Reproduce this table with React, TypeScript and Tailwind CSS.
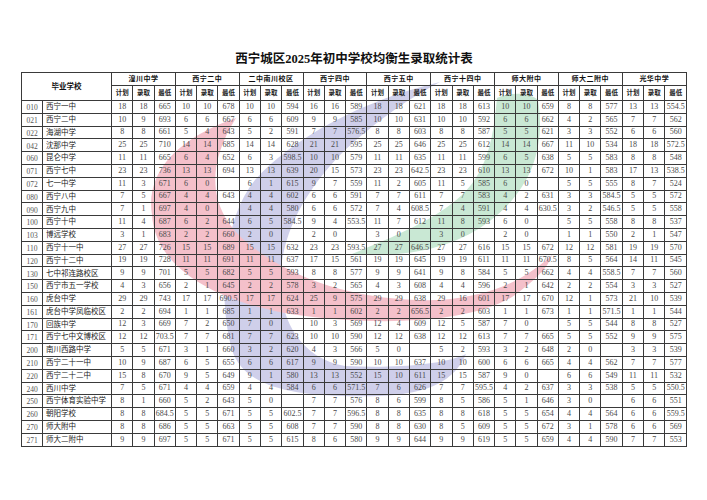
import React from "react";

const GROUPS = [
  "湟川中学",
  "西宁二中",
  "二中南川校区",
  "西宁四中",
  "西宁五中",
  "西宁十四中",
  "师大附中",
  "师大二附中",
  "光华中学",
];

const SUB = ["计划", "录取", "最低"];

// id name then 9 x (计划 录取 最低), "-" = empty
const RAW = [
  "010 西宁一中 18 18 665 10 10 678 10 10 594 16 16 589 18 18 621 18 18 613 10 10 659 8 8 577 13 13 554.5",
  "021 西宁二中 10 9 693 6 6 667 6 6 609 9 9 585 10 10 631 10 10 592 6 6 662 4 2 565 7 7 562",
  "022 海湖中学 8 8 661 5 4 643 5 2 591 7 7 576.5 8 8 603 8 8 587 5 5 621 3 3 552 6 6 560",
  "042 沈那中学 25 25 710 14 14 685 14 14 628 21 21 595 25 25 646 25 25 612 14 14 667 11 10 534 18 18 572.5",
  "060 昆仑中学 11 11 665 6 4 652 6 3 598.5 10 10 579 11 11 635 11 11 599 6 5 638 5 5 583 8 8 548",
  "071 西宁七中 23 23 736 13 13 694 13 13 639 20 15 573 23 23 642.5 23 23 610 13 13 672 10 1 583 17 13 538.5",
  "072 七一中学 11 3 671 6 0 - 6 1 615 9 7 559 11 2 605 11 5 585 6 0 - 5 5 555 8 7 524",
  "080 西宁八中 7 5 667 4 4 643 4 4 602 6 6 591 7 7 611 7 7 583 4 2 631 3 3 584.5 5 5 572",
  "090 西宁九中 7 1 697 4 0 - 4 4 580 6 6 572 7 4 608.5 7 4 591 4 4 630.5 3 2 546.5 5 5 558",
  "100 西宁十中 11 4 687 6 2 644 6 5 584.5 9 4 553.5 11 7 612 11 8 593 6 0 - 5 5 558 8 8 537",
  "103 博远学校 3 1 683 2 2 660 2 0 - 2 0 - 3 0 - 3 0 - 2 0 - 1 1 550 2 1 547",
  "110 西宁十一中 27 27 726 15 15 689 15 15 632 23 23 593.5 27 27 646.5 27 27 616 15 15 672 12 12 581 19 19 570",
  "120 西宁十二中 19 19 728 11 11 691 11 11 637 17 15 561 19 19 645 19 19 611 11 11 670.5 8 5 564 14 11 545",
  "130 七中祁连路校区 9 9 701 5 5 682 5 5 593 8 8 577 9 9 641 9 8 584 5 5 662 4 4 558.5 7 7 560",
  "150 西宁市五一学校 4 3 656 2 1 645 2 2 578 3 2 565 4 3 608 4 4 596 2 1 642 2 2 554 3 3 527",
  "160 虎台中学 29 29 743 17 17 690.5 17 17 624 25 9 575 29 29 638 29 16 601 17 17 670 12 1 573 21 10 539",
  "161 虎台中学凤临校区 2 2 694 1 1 685 1 1 633 1 1 602 2 2 656.5 2 2 603 1 1 673 1 1 571.5 1 1 544",
  "170 回族中学 12 3 669 7 2 650 7 0 - 10 3 569 12 4 609 12 5 587 7 0 - 5 5 544 8 8 527",
  "171 西宁七中文博校区 12 12 703.5 7 7 681 7 7 623 10 10 590 12 12 638 12 12 613 7 7 665 5 5 552 9 9 575",
  "200 南川西路中学 5 5 671 3 1 660 3 2 620 4 3 566 5 0 - 5 2 593 3 2 648 2 0 - 3 3 539",
  "210 西宁二十一中 10 9 687 6 5 655 6 6 617 9 9 590 10 10 637 10 10 600 6 6 665 4 4 562 7 7 577",
  "220 西宁二十二中 15 8 670 9 5 649 9 1 580 13 13 552 15 10 611 15 15 587 9 0 - 6 6 549 11 11 532",
  "240 西川中学 7 5 671 4 4 659 4 4 584 6 6 571.5 7 6 626 7 7 595.5 4 2 637 3 3 538 5 5 550.5",
  "250 西宁体育实验中学 8 1 660 5 2 643 5 0 - 7 7 576 8 6 599 8 5 586 5 1 646 3 0 - 6 6 551",
  "260 朝阳学校 8 8 684.5 5 5 671 5 5 602.5 7 7 596.5 8 8 635 8 8 618 5 5 654 4 4 564 6 6 559.5",
  "270 师大附中 8 8 686 5 5 663 5 5 608 7 7 590 8 8 630 8 5 609 5 5 672 3 1 578 6 6 569",
  "271 师大二附中 9 9 697 5 5 671 5 5 615 8 6 580 9 9 644 9 9 619 5 5 659 4 4 590 7 7 553",
];

const rows = RAW.map((line) => {
  const [id, name, ...vals] = line.split(" ");
  return { id, name, vals: vals.map((v) => (v === "-" ? "" : v)) };
});

const cell = "border border-[#3a3a3a] p-0 text-center align-middle";

function Watermark() {
  return (
    <svg
      className="pointer-events-none absolute left-0 top-0 h-[500px] w-[707px]"
      viewBox="0 0 707 500"
    >
      <path
        d="M 440 82 C 362 100 290 140 255 180 C 222 220 218 300 232 350 C 245 390 300 398 380 396 C 430 394 455 380 466 354 C 440 366 390 368 345 366 C 300 358 282 320 280 285 C 280 230 310 185 345 150 C 380 118 410 98 440 82 Z"
        fill="#cfcfea"
      />
      <path
        d="M 236 118 C 178 138 145 172 152 215 C 155 265 210 300 290 314 C 370 326 470 325 515 295 C 535 280 548 268 552 255 C 530 275 500 295 440 300 C 370 302 300 285 250 245 C 215 218 200 175 236 118 Z"
        fill="#f4c0ca"
      />
      <path
        d="M 497 98 C 508 92 530 92 538 100 C 546 150 530 195 480 228 C 445 250 400 258 352 254 C 395 236 435 220 462 195 C 490 168 494 130 497 98 Z"
        fill="#c9e8d4"
      />
    </svg>
  );
}

export default function App() {
  return (
    <div className="relative h-[500px] w-[707px] overflow-hidden bg-white font-['Liberation_Serif','Noto_Sans_CJK_SC',serif] text-[#3c3c3c]">
      <Watermark />
      <div className="relative flex flex-col items-start pl-[21px]">
        <h1 className="mt-[51px] h-[16px] w-[666px] text-center text-[12.5px] font-bold leading-[16px] text-[#111]">
          西宁城区2025年初中学校均衡生录取统计表
        </h1>
        <table className="mt-[5px] w-[666px] table-fixed border-collapse border-[1.5px] border-[#2a2a2a]">
          <colgroup>
            <col className="w-[21px]" />
            <col className="w-[69px]" />
            {Array.from({ length: 27 }).map((_, i) => (
              <col key={i} />
            ))}
          </colgroup>
          <thead>
            <tr className="h-[13px]">
              <th
                colSpan={2}
                rowSpan={2}
                className={`${cell} text-[7.5px] font-bold leading-none text-[#111]`}
              >
                毕业学校
              </th>
              {GROUPS.map((g) => (
                <th
                  key={g}
                  colSpan={3}
                  className={`${cell} text-[7px] font-bold leading-none tracking-[0.5px] text-[#111]`}
                >
                  {g}
                </th>
              ))}
            </tr>
            <tr className="h-[15px]">
              {GROUPS.map((g) =>
                SUB.map((s) => (
                  <th
                    key={g + s}
                    className={`${cell} text-[6.5px] font-bold leading-none text-[#222]`}
                  >
                    {s}
                  </th>
                ))
              )}
            </tr>
          </thead>
          <tbody>
            {rows.map((r) => (
              <tr key={r.id} className="h-[12.8px]">
                <td className={`${cell} pt-[2px] text-[7.5px] leading-none text-[#555]`}>
                  {r.id}
                </td>
                <td className="border border-[#3a3a3a] p-0 pl-[3px] text-left align-middle text-[7.5px] leading-none whitespace-nowrap text-[#222]">
                  {r.name}
                </td>
                {r.vals.map((v, i) => (
                  <td
                    key={i}
                    className={`${cell} text-[8px] leading-none whitespace-nowrap text-[#4a4a4a]`}
                  >
                    {v}
                  </td>
                ))}
              </tr>
            ))}
          </tbody>
        </table>
      </div>
    </div>
  );
}
